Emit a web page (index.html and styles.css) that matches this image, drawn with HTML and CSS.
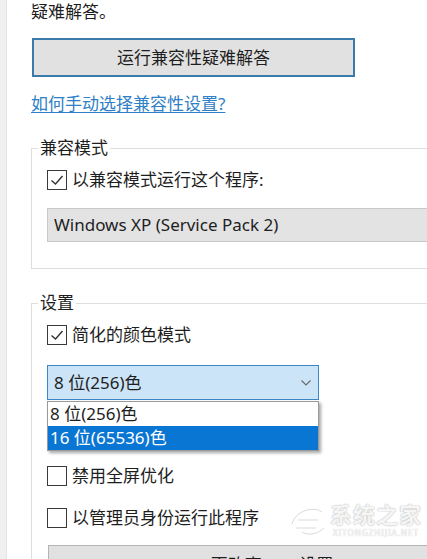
FILE: index.html
```html
<!DOCTYPE html>
<html lang="zh-CN">
<head>
<meta charset="utf-8">
<link rel="stylesheet" href="styles.css">
</head>
<body>
<div class="window">
  <div class="strip"></div>
  <div class="content">
    <p class="desc"><span class="line">如果此程序在此版本的 Windows 上无法正常工作，请尝试运行兼容性</span><span class="line">疑难解答。</span></p>
    <div class="btn-primary">运行兼容性疑难解答</div>
    <a class="link" href="#">如何手动选择兼容性设置?</a>

    <fieldset class="group group-compat">
      <legend class="group-title">兼容模式</legend>
      <div class="check-row">
        <span class="checkbox"><svg viewBox="0 0 20 20" width="20" height="20"><polyline points="4.5,10.5 8.5,14 15.5,6" fill="none" stroke="#333" stroke-width="1.4"/></svg></span>
        <span>以兼容模式运行这个程序:</span>
      </div>
      <div class="combo-disabled">Windows XP (Service Pack 2)</div>
    </fieldset>

    <fieldset class="group group-settings">
      <legend class="group-title">设置</legend>
      <div class="check-row">
        <span class="checkbox"><svg viewBox="0 0 20 20" width="20" height="20"><polyline points="4.5,10.5 8.5,14 15.5,6" fill="none" stroke="#333" stroke-width="1.4"/></svg></span>
        <span>简化的颜色模式</span>
      </div>
      <div class="combo-wrap">
        <div class="combo-open">
          <span>8 位(256)色</span>
          <svg class="chevron" viewBox="0 0 10 6" width="10" height="6"><polyline points="0.5,0.5 5,5 9.5,0.5" fill="none" stroke="#6b6b6b" stroke-width="1.2"/></svg>
        </div>
        <ul class="dropdown">
          <li class="option">8 位(256)色</li>
          <li class="option option-selected">16 位(65536)色</li>
        </ul>
      </div>
      <div class="check-row row-fullscreen">
        <span class="checkbox"></span>
        <span>禁用全屏优化</span>
      </div>
      <div class="check-row row-admin">
        <span class="checkbox"></span>
        <span>以管理员身份运行此程序</span>
      </div>
      <div class="btn-secondary">更改高 DPI 设置</div>
    </fieldset>
  </div>
  <div class="watermark">
    <svg class="wm-logo" viewBox="0 0 40 34" width="40" height="34"><path d="M4 22 C8 8 26 4 34 10 M10 18 L30 18 M8 26 L28 26 M14 30 C20 34 30 32 36 26" fill="none" stroke="#ffffff" stroke-width="3"/><path d="M4 22 C8 8 26 4 34 10 M10 18 L30 18 M8 26 L28 26 M14 30 C20 34 30 32 36 26" fill="none" stroke="rgba(150,150,150,0.35)" stroke-width="1"/></svg>
    <div class="wm-text">
      <span class="wm-main">系统之家</span>
      <span class="wm-sub">XITONGZHIJIA.NET</span>
    </div>
  </div>
</div>
</body>
</html>
```
FILE: styles.css
```css
html, body {
  margin: 0;
  padding: 0;
  background: #ffffff;
}

body {
  font-family: "Noto Sans", "Noto Sans CJK SC", sans-serif;
  font-size: 17px;
  line-height: 24px;
  color: #1e1e1e;
}

.window {
  position: relative;
  display: flex;
  width: 427px;
  height: 559px;
  overflow: hidden;
}

.strip {
  flex: 0 0 6px;
  background: #f0f0f0;
  border-right: 1px solid #e4e4e4;
}

.content {
  flex: 1;
  padding-left: 24px;
  min-width: 0;
}

.desc {
  margin: -24px 0 0 0;
  white-space: nowrap;
}

.line {
  display: block;
}

.btn-primary {
  box-sizing: border-box;
  margin: 14px 0 0 1px;
  width: 323px;
  height: 39px;
  border: 2px solid #3b7bab;
  background: #e1e1e1;
  display: flex;
  align-items: center;
  justify-content: center;
  color: #1e1e1e;
}

.link {
  display: block;
  margin-top: 15px;
  color: #2f80c6;
  text-decoration: underline;
  text-underline-offset: 2px;
  text-decoration-thickness: 1px;
  width: max-content;
}

.group {
  margin: 20px -60px 0 0;
  padding: 8px 0 0 15px;
  border: 1px solid #dedede;
  min-width: 0;
}

.group-compat {
  padding-bottom: 26px;
}

.group-settings {
  margin-top: 22px;
  padding-bottom: 40px;
}

.group-title {
  margin-left: -9px;
  padding: 0 2px;
  line-height: 24px;
}

.check-row {
  display: flex;
  align-items: center;
  gap: 5px;
  height: 24px;
}

.checkbox {
  box-sizing: border-box;
  width: 20px;
  height: 20px;
  border: 1px solid #3a3a3a;
  background: #fff;
  display: flex;
  align-items: center;
  justify-content: center;
  flex: 0 0 auto;
}

.checkbox svg {
  display: block;
  margin: -1px;
}

.combo-disabled {
  box-sizing: border-box;
  margin-top: 16px;
  height: 34px;
  border: 1px solid #c8c8c8;
  background: #e3e3e3;
  padding-left: 6px;
  display: flex;
  align-items: center;
  color: #1e1e1e;
}

.combo-wrap {
  position: relative;
  width: 272px;
  margin-top: 18px;
}

.combo-open {
  box-sizing: border-box;
  height: 35px;
  border: 1px solid #3c86c6;
  background: #cce4f7;
  padding: 0 7px 0 6px;
  display: flex;
  align-items: center;
  justify-content: space-between;
}

.chevron {
  display: block;
  margin-top: 1px;
}

.dropdown {
  position: absolute;
  left: 0;
  top: 36px;
  width: 272px;
  box-sizing: border-box;
  margin: 0;
  padding: 0;
  list-style: none;
  background: #ffffff;
  border: 1px solid #9a9a9a;
  box-shadow: 2px 2px 3px rgba(0, 0, 0, 0.35);
}

.option {
  height: 24px;
  line-height: 23px;
  padding-left: 2px;
  color: #1e1e1e;
}

.option-selected {
  background: #0a76d4;
  color: #ffffff;
}

.row-fullscreen {
  margin-top: 64px;
}

.row-admin {
  margin-top: 18px;
}

.btn-secondary {
  box-sizing: border-box;
  margin: 15px -40px 0 1px;
  height: 39px;
  border: 1px solid #b4b4b4;
  background: #e1e1e1;
  display: flex;
  align-items: center;
  justify-content: center;
  padding-right: 30px;
}

.watermark {
  position: absolute;
  left: 288px;
  top: 500px;
  display: flex;
  align-items: center;
  gap: 2px;
  pointer-events: none;
  white-space: nowrap;
}

.wm-logo {
  display: block;
}

.wm-text {
  display: flex;
  flex-direction: column;
  align-items: center;
}

.wm-main {
  font-size: 22px;
  line-height: 28px;
  letter-spacing: 1px;
  color: rgba(255, 255, 255, 0.92);
  text-shadow: 0 0 1px rgba(110, 110, 110, 0.55), 0 0 2px rgba(160, 160, 160, 0.4);
  font-weight: 700;
}

.wm-sub {
  font-size: 8px;
  line-height: 10px;
  letter-spacing: 1px;
  color: rgba(255, 255, 255, 0.92);
  text-shadow: 0 0 1px rgba(110, 110, 110, 0.55);
}
```
